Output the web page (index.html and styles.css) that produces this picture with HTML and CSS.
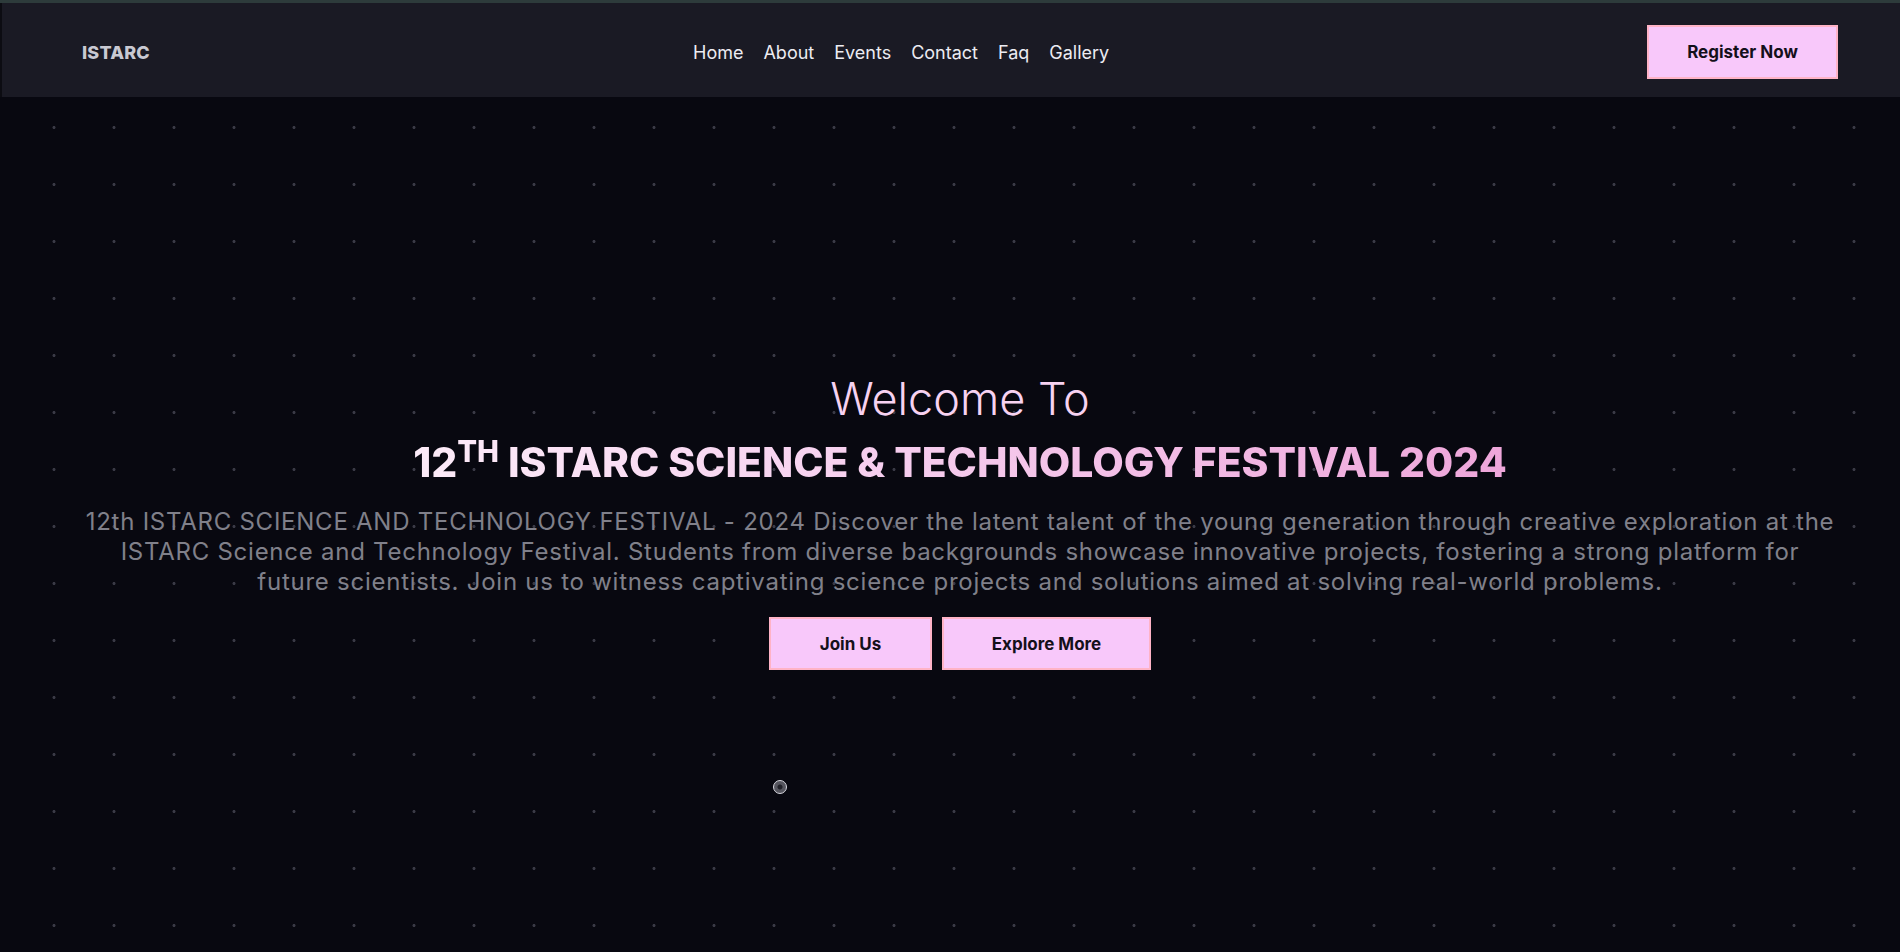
FILE: index.html
```html
<!DOCTYPE html>
<html lang="en">
<head>
<meta charset="utf-8">
<title>ISTARC Science &amp; Technology Festival 2024</title>
<link rel="stylesheet" href="styles.css">
</head>
<body>
<div class="page">
  <header class="navbar">
    <a class="logo" href="#">ISTARC</a>
    <nav class="nav-links">
      <a href="#">Home</a>
      <a href="#">About</a>
      <a href="#">Events</a>
      <a href="#">Contact</a>
      <a href="#">Faq</a>
      <a href="#">Gallery</a>
    </nav>
    <a class="btn btn-register" href="#">Register Now</a>
  </header>
  <main class="hero">
    <div class="hero-content">
      <h2 class="welcome">Welcome To</h2>
      <h1 class="title"><span class="num">12<sup>TH</sup></span> ISTARC SCIENCE &amp; TECHNOLOGY FESTIVAL 2024</h1>
      <p class="lead">12th ISTARC SCIENCE AND TECHNOLOGY FESTIVAL - 2024 Discover the latent talent of the young generation through creative exploration at the ISTARC Science and Technology Festival. Students from diverse backgrounds showcase innovative projects, fostering a strong platform for future scientists. Join us to witness captivating science projects and solutions aimed at solving real-world problems.</p>
      <div class="actions">
        <a class="btn btn-hero btn-join" href="#">Join Us</a>
        <a class="btn btn-hero btn-explore" href="#">Explore More</a>
      </div>
    </div>
    <div class="cursor"></div>
  </main>
</div>
</body>
</html>
```

FILE: styles.css
```css
* { box-sizing: border-box; }
html, body { margin: 0; padding: 0; }
body {
  background: #080810;
  font-family: "Inter", "Open Sans", sans-serif;
  color: #e8e8ee;
  overflow: hidden;
}
a { text-decoration: none; color: inherit; }
.page {
  height: 952px;
  display: flex;
  flex-direction: column;
  border-top: 3px solid #2d3b3b;
}
.navbar {
  height: 94px;
  flex: 0 0 auto;
  background: #1a1a24;
  border-left: 2px solid #0c0c12;
  display: flex;
  align-items: center;
  justify-content: space-between;
  padding: 4px 62px 0 80px;
  position: relative;
}
.logo {
  font-weight: 800;
  font-size: 18px;
  color: #c9c9d2;
  letter-spacing: 0.2px;
}
.nav-links {
  position: absolute;
  left: 691px;
  top: 4px;
  bottom: 0;
  display: flex;
  align-items: center;
  gap: 20px;
}
.nav-links a {
  font-size: 18px;
  font-weight: 400;
  color: #ececf2;
}
.btn {
  display: flex;
  align-items: center;
  justify-content: center;
  background: #f8c8fa;
  border: 2px solid #ffb3c6;
  color: #14101a;
  font-weight: 700;
}
.btn-register {
  width: 191px;
  height: 54px;
  font-size: 17px;
}
.hero {
  flex: 1 1 auto;
  position: relative;
  display: flex;
  align-items: center;
  justify-content: center;
  padding-left: 20px;
  background-color: #080810;
  background-image: radial-gradient(circle at center, #3a3a46 0, #3a3a46 1.1px, transparent 1.9px);
  background-size: 60px 57px;
  background-position: 24px 2px;
}
.hero-content {
  display: flex;
  flex-direction: column;
  align-items: center;
  text-align: center;
  width: 1752px;
  margin-bottom: 7px;
}
.welcome {
  margin: 0;
  font-size: 45px;
  font-weight: 300;
  color: #f7d2f1;
  line-height: 54px;
}
.title {
  margin: 10px 0 0;
  font-size: 40.8px;
  font-weight: 800;
  line-height: 53px;
  background: linear-gradient(90deg, #fcebf8 0%, #f6cdee 45%, #eea6da 100%);
  -webkit-background-clip: text;
  background-clip: text;
  color: transparent;
}
.title sup {
  font-size: 0.72em;
  vertical-align: 0.5em;
  line-height: 0;
}
.lead {
  margin: 18px 0 0;
  font-size: 24px;
  letter-spacing: 0.75px;
  line-height: 30px;
  color: #80808a;
  font-weight: 400;
}
.actions {
  display: flex;
  gap: 10px;
  margin-top: 20px;
}
.btn-hero {
  height: 53px;
  font-size: 17px;
}
.btn-join { width: 163px; }
.btn-explore { width: 209px; }
.cursor {
  position: absolute;
  left: 773px;
  top: 683px;
  width: 14px;
  height: 14px;
  border-radius: 50%;
  border: 1.5px solid #d8d8e0;
  background: radial-gradient(circle, #202028 0, #202028 2px, #55555e 3px);
}
```
